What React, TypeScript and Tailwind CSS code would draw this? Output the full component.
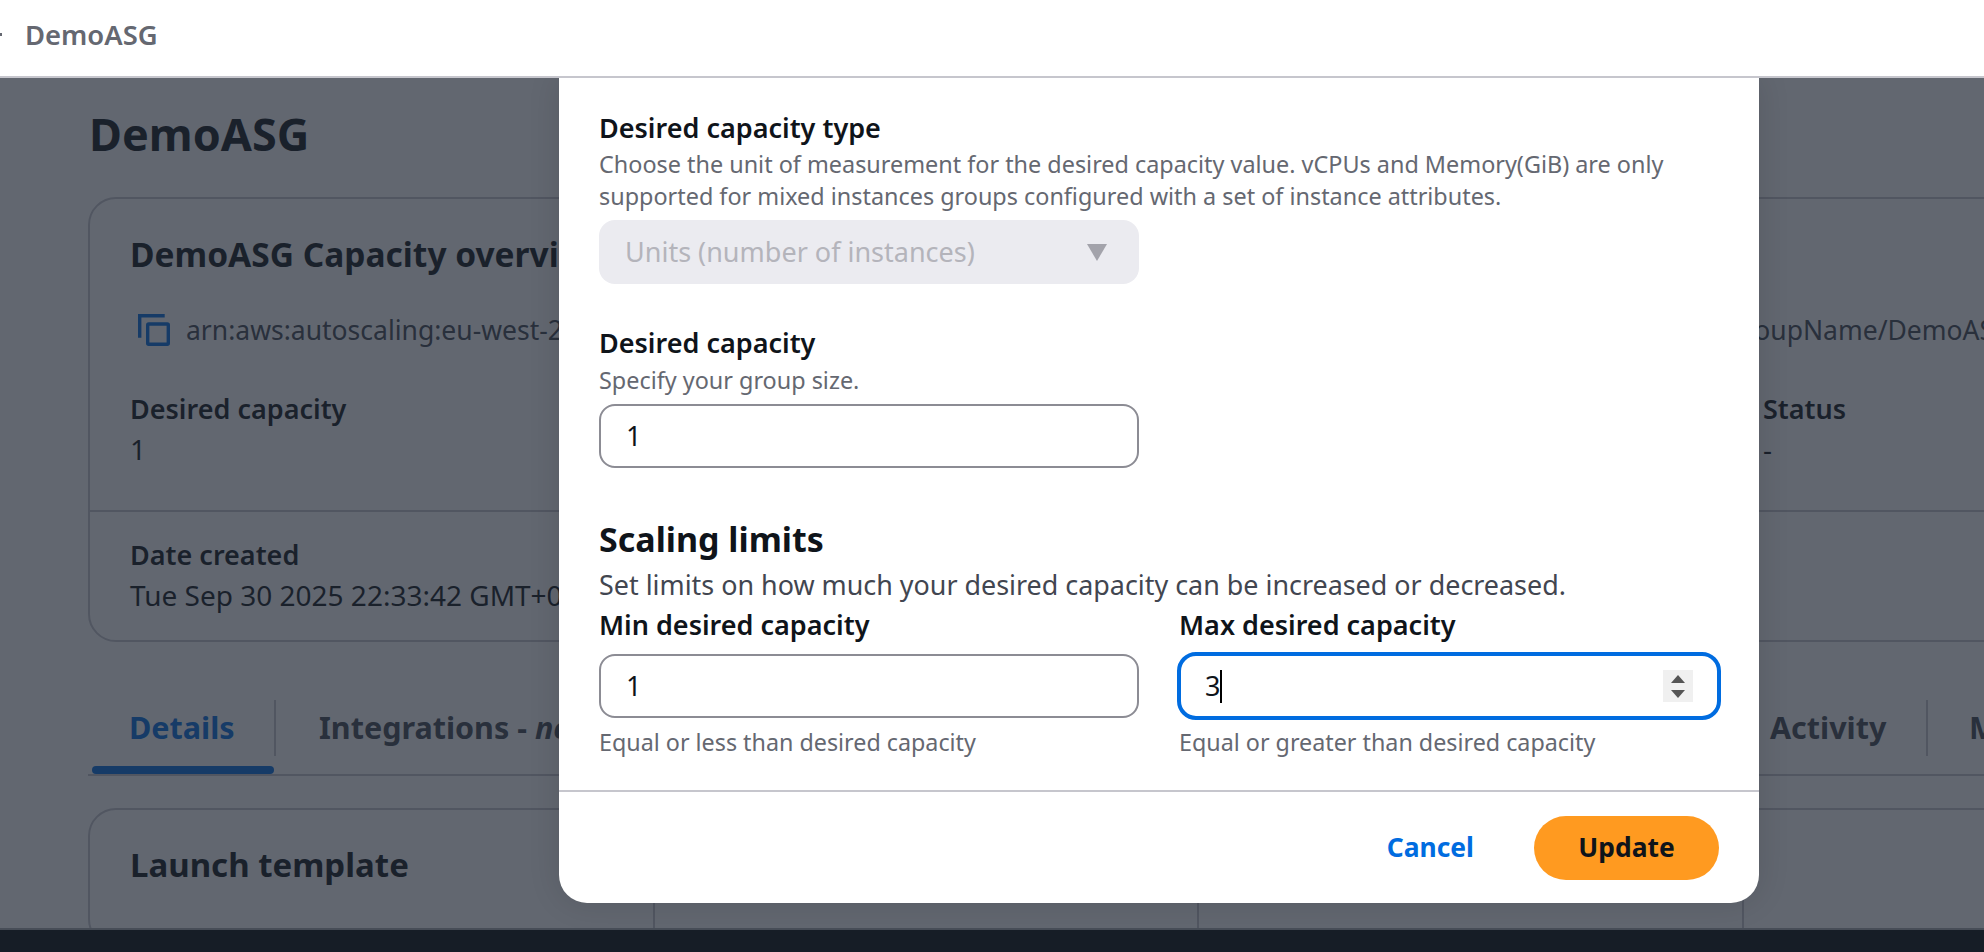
const TABS: { label: string; width: string; inset: string; active?: boolean }[] = [
  { label: 'Details', width: 'w-[188px]', inset: 'pl-[41px]', active: true },
  { label: 'Integrations', width: 'w-[600px]', inset: 'pl-[43px]' },
  { label: 'Automatic scaling', width: 'w-[430px]', inset: 'pl-[41px]' },
  { label: 'Instance management', width: 'w-[423px]', inset: 'pl-[41px]' },
  { label: 'Activity', width: 'w-[199px]', inset: 'pl-[41px]' },
  { label: 'Monitoring', width: 'w-[300px]', inset: 'pl-[41px]' },
]

function CopyIcon() {
  return (
    <svg viewBox="0 0 32 32" className="h-8 w-8 shrink-0" fill="none" stroke="#006ce0" strokeWidth="3.4">
      <path d="M1.7 23.7V1.7H26.7" />
      <rect x="9.7" y="10" width="20.6" height="20.3" rx="1" />
    </svg>
  )
}

function FieldBox({ value }: { value: string }) {
  return (
    <div className="flex h-16 items-center rounded-2xl border-2 border-[#8c8c94] bg-white pl-[25px] text-[27px] text-[#0f141a]">
      {value}
    </div>
  )
}

function BackgroundPage() {
  return (
    <div className="w-[2200px] pl-[88px] pt-[28px] text-[#0f141a]">
      <h1 className="ml-[1px] text-[45px] font-bold leading-[56px]">DemoASG</h1>

      <section className="mt-[35px] rounded-[28px] border-2 border-[#c6c6cd] bg-white">
        <div className="px-[40px] pt-[35px]">
          <h2 className="whitespace-nowrap text-[33.5px] font-bold leading-10">DemoASG Capacity overview</h2>
          <div className="mt-[40px] flex h-8 items-center gap-4 text-[26.5px] leading-8 text-[#424650]">
            <div className="ml-2">
              <CopyIcon />
            </div>
            <span className="whitespace-nowrap">
              arn:aws:autoscaling:eu-west-2:536697239187:autoScalingGroup:2b8c5d3e-7a41-4f09-9e16-c3d7a8f05b12e4a9d:autoScalingGroupName/DemoASG
            </span>
          </div>
          <div className="mt-[47px] grid grid-cols-[1633px_1fr] pb-[45px] leading-8">
            <div>
              <p className="text-[27px] font-semibold">Desired capacity</p>
              <p className="mt-2 text-[28px]">1</p>
            </div>
            <div>
              <p className="text-[27px] font-semibold">Status</p>
              <p className="mt-2 text-[28px]">-</p>
            </div>
          </div>
        </div>
        <div className="border-t-2 border-[#c6c6cd] px-[40px] pb-[29px] pt-[27px] leading-8">
          <p className="text-[27px] font-semibold">Date created</p>
          <p className="mt-2 whitespace-nowrap text-[28px]">Tue Sep 30 2025 22:33:42 GMT+0100 (British Summer Time)</p>
        </div>
      </section>

      <nav className="mt-[58px] flex h-[76px] items-start border-b-2 border-[#c6c6cd]">
        {TABS.map((tab, i) => (
          <div key={tab.label} className={`relative h-[56px] shrink-0 ${tab.width} ${i < TABS.length - 1 ? 'border-r-2 border-[#c6c6cd]' : ''}`}>
            <div
              className={`flex h-full items-center text-[30.5px] font-bold ${tab.inset} ${tab.active ? 'text-[#006ce0]' : 'text-[#424650]'}`}
            >
              <span className="whitespace-pre">
                {tab.label}
                {i === 1 && (
                  <>
                    {' - '}
                    <em className="font-bold">new</em>
                  </>
                )}
              </span>
            </div>
            {tab.active && <div className="absolute left-[4px] top-[66px] h-2 w-[182px] rounded-full bg-[#006ce0]" />}
          </div>
        ))}
      </nav>

      <section className="mt-[32px] rounded-[28px] border-2 border-[#c6c6cd] bg-white">
        <h2 className="pl-[40px] pt-[35px] text-[33px] font-bold leading-10">Launch template</h2>
        <div className="grid h-[60px] grid-cols-[565px_544px_545px_1fr]">
          <div className="border-r-2 border-[#c6c6cd]" />
          <div className="border-r-2 border-[#c6c6cd]" />
          <div className="border-r-2 border-[#c6c6cd]" />
        </div>
      </section>
    </div>
  )
}

function EditModal() {
  return (
    <div className="absolute left-[559px] top-0 w-[1200px] rounded-b-[28px] bg-white shadow-[0_0_32px_rgba(0,0,0,0.12)]">
      <div className="px-10 pt-[34px]">
        <p className="text-[27px] font-semibold leading-8 text-[#0f141a]">Desired capacity type</p>
        <p className="mt-1 text-[23.4px] leading-8 text-[#656871]">
          Choose the unit of measurement for the desired capacity value. vCPUs and Memory(GiB) are only
          <br />
          supported for mixed instances groups configured with a set of instance attributes.
        </p>
        <div className="mt-2 flex h-16 w-[540px] items-center justify-between rounded-2xl bg-[#ebebf0] pl-[26px] pr-[32px] text-[27px] text-[#b4b4bb]">
          Units (number of instances)
          <svg viewBox="0 0 20 17" className="h-[17px] w-5" fill="#a3a3ab">
            <path d="M0 0h20L10 17z" />
          </svg>
        </div>

        <p className="mt-[43px] text-[27px] font-semibold leading-8 text-[#0f141a]">Desired capacity</p>
        <p className="mt-[5px] text-[23.4px] leading-8 text-[#656871]">Specify your group size.</p>
        <div className="mt-2 w-[540px]">
          <FieldBox value="1" />
        </div>

        <h2 className="mt-[51px] text-[34px] font-bold leading-10 text-[#0f141a]">Scaling limits</h2>
        <p className="mt-2 text-[26.9px] leading-9 text-[#424650]">
          Set limits on how much your desired capacity can be increased or decreased.
        </p>

        <div className="mt-[6px] grid grid-cols-2 gap-x-10">
          <div>
            <p className="text-[27px] font-semibold leading-8 text-[#0f141a]">Min desired capacity</p>
            <div className="mt-[13px]">
              <FieldBox value="1" />
            </div>
            <p className="mt-2 text-[23.3px] leading-8 text-[#656871]">Equal or less than desired capacity</p>
          </div>
          <div>
            <p className="text-[27px] font-semibold leading-8 text-[#0f141a]">Max desired capacity</p>
            <div className="relative -mx-[2px] mt-[11px] flex h-[68px] items-center rounded-[19px] border-4 border-[#006ce0] bg-white pl-[24px] text-[27px] text-[#0f141a]">
              3
              <span className="h-[33px] w-[2px] bg-black" />
              <div className="absolute left-[482px] top-[14px] flex h-8 w-[30px] flex-col items-center justify-center gap-[7px] bg-[#f0f0f0]">
                <svg viewBox="0 0 14 8" className="h-2 w-[14px]" fill="#555555">
                  <path d="M7 0l7 8H0z" />
                </svg>
                <svg viewBox="0 0 14 8" className="h-2 w-[14px]" fill="#555555">
                  <path d="M0 0h14L7 8z" />
                </svg>
              </div>
            </div>
            <p className="mt-[6px] text-[23.3px] leading-8 text-[#656871]">Equal or greater than desired capacity</p>
          </div>
        </div>
      </div>

      <div className="mt-8 flex items-center justify-end gap-[60px] border-t-2 border-[#c6c6cd] pb-[23px] pr-10 pt-6">
        <button type="button" className="text-[26.4px] font-bold text-[#006ce0]">
          Cancel
        </button>
        <button type="button" className="h-16 w-[185px] rounded-full bg-[#ff9a20] text-[26.4px] font-bold text-[#0f141a]">
          Update
        </button>
      </div>
    </div>
  )
}

export default function App() {
  return (
    <div className="flex h-screen flex-col overflow-hidden bg-white font-['Noto_Sans',sans-serif]">
      <header className="flex h-[78px] shrink-0 items-center border-b-2 border-[#c6c6cd] bg-white pb-[7px]">
        <span className="h-[3px] w-[2px] bg-[#656871]" />
        <span className="ml-[23px] text-[27.4px] font-semibold text-[#656871]">DemoASG</span>
      </header>
      <main className="relative min-h-0 flex-1 overflow-hidden">
        <BackgroundPage />
        <div className="absolute inset-0 bg-[#1f2733]/70" />
        <EditModal />
      </main>
      <footer className="h-6 shrink-0 border-t-2 border-[#474d57] bg-[#161d26]" />
    </div>
  )
}
